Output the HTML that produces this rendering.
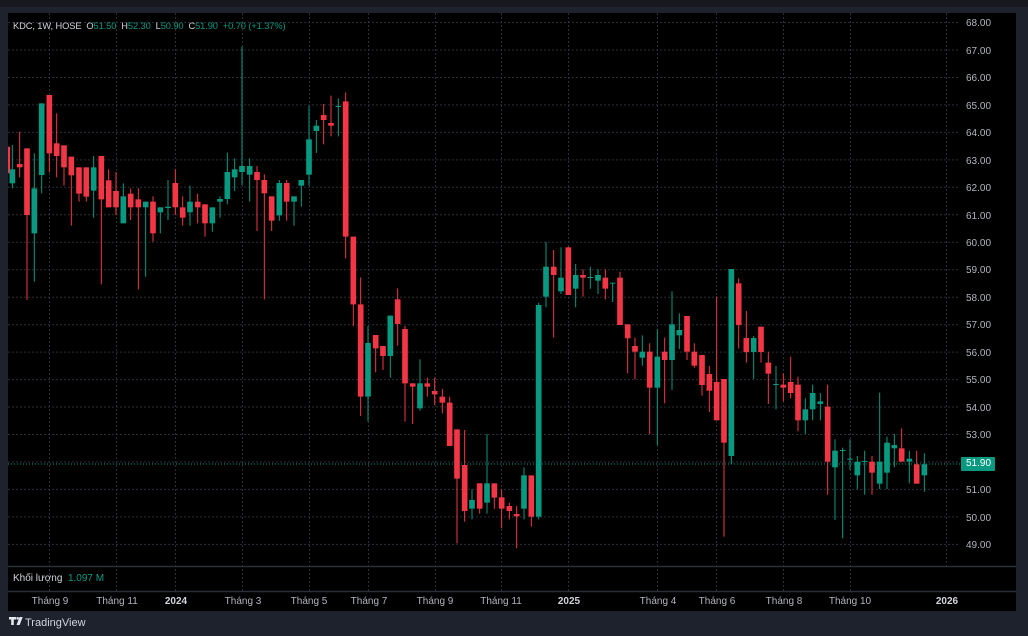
<!DOCTYPE html>
<html><head><meta charset="utf-8"><style>
body{margin:0;width:1028px;height:636px;background:#1e222d;overflow:hidden;font-family:"Liberation Sans",sans-serif;}
.top{position:absolute;left:0;top:0;width:1028px;height:7px;background:#17191f}
.panel{position:absolute;left:8px;top:13px;width:1008px;height:598px;background:#000}
.t{position:absolute;font-size:10px;color:#b2b5be;white-space:nowrap}
.p{margin-top:2px}
.ax{position:absolute;font-size:10px;color:#b2b5be;transform:translateX(-50%);top:596px}
.b{font-weight:bold;color:#d1d4dc}
.g{color:#089981}
</style></head><body>
<div class="top"></div>
<div class="panel"></div>
<svg width="1028" height="636" style="position:absolute;left:0;top:0">
<defs><clipPath id="c"><rect x="8" y="13" width="952" height="553"/></clipPath></defs>
<g stroke="#2a2e39" stroke-width="1" stroke-dasharray="2,2">
<line x1="8" x2="960" y1="22.5" y2="22.5"/><line x1="8" x2="960" y1="50" y2="50"/><line x1="8" x2="960" y1="77.5" y2="77.5"/><line x1="8" x2="960" y1="104.9" y2="104.9"/><line x1="8" x2="960" y1="132.4" y2="132.4"/><line x1="8" x2="960" y1="159.9" y2="159.9"/><line x1="8" x2="960" y1="187.3" y2="187.3"/><line x1="8" x2="960" y1="214.8" y2="214.8"/><line x1="8" x2="960" y1="242.3" y2="242.3"/><line x1="8" x2="960" y1="269.7" y2="269.7"/><line x1="8" x2="960" y1="297.2" y2="297.2"/><line x1="8" x2="960" y1="324.7" y2="324.7"/><line x1="8" x2="960" y1="352.1" y2="352.1"/><line x1="8" x2="960" y1="379.6" y2="379.6"/><line x1="8" x2="960" y1="407" y2="407"/><line x1="8" x2="960" y1="434.5" y2="434.5"/><line x1="8" x2="960" y1="462" y2="462"/><line x1="8" x2="960" y1="489.4" y2="489.4"/><line x1="8" x2="960" y1="516.9" y2="516.9"/><line x1="8" x2="960" y1="544.4" y2="544.4"/>
<g>
<line x1="49.5" x2="49.5" y1="13" y2="592"/><line x1="116.5" x2="116.5" y1="13" y2="592"/><line x1="175.5" x2="175.5" y1="13" y2="592"/><line x1="242.5" x2="242.5" y1="13" y2="592"/><line x1="309.5" x2="309.5" y1="13" y2="592"/><line x1="368.5" x2="368.5" y1="13" y2="592"/><line x1="435.5" x2="435.5" y1="13" y2="592"/><line x1="501.5" x2="501.5" y1="13" y2="592"/><line x1="568.5" x2="568.5" y1="13" y2="592"/><line x1="657.5" x2="657.5" y1="13" y2="592"/><line x1="716.5" x2="716.5" y1="13" y2="592"/><line x1="783.5" x2="783.5" y1="13" y2="592"/><line x1="850.5" x2="850.5" y1="13" y2="592"/><line x1="946.5" x2="946.5" y1="13" y2="566"/>
</g></g>
<g stroke="#2a2e39" stroke-width="1.5"><line x1="8" x2="1016" y1="566.5" y2="566.5"/><line x1="8" x2="1016" y1="591.5" y2="591.5"/></g>
<line x1="8" x2="960" y1="464" y2="464" stroke="#089981" stroke-dasharray="1,2" stroke-width="1"/>
<g clip-path="url(#c)">
<g transform="translate(0,40) scale(0.33333)">
<g stroke="#f23645" stroke-width="3"><line x1="22" x2="22" y1="315" y2="420"/><line x1="59" x2="59" y1="275" y2="412"/><line x1="81" x2="81" y1="325" y2="780"/><line x1="148" x2="148" y1="165" y2="397"/><line x1="170" x2="170" y1="220" y2="412"/><line x1="192" x2="192" y1="316" y2="437"/><line x1="214" x2="214" y1="350" y2="557"/><line x1="237" x2="237" y1="382" y2="485"/><line x1="259" x2="259" y1="382" y2="485"/><line x1="304" x2="304" y1="348" y2="733"/><line x1="326" x2="326" y1="388" y2="502"/><line x1="348" x2="348" y1="396" y2="525"/><line x1="392" x2="392" y1="445" y2="540"/><line x1="415" x2="415" y1="445" y2="748"/><line x1="459" x2="459" y1="469" y2="605"/><line x1="526" x2="526" y1="388" y2="525"/><line x1="548" x2="548" y1="469" y2="557"/><line x1="593" x2="593" y1="461" y2="550"/><line x1="615" x2="615" y1="493" y2="590"/></g>
<g stroke="#f23645" stroke-width="17"><line x1="22" x2="22" y1="320" y2="400"/><line x1="59" x2="59" y1="372" y2="382"/><line x1="81" x2="81" y1="325" y2="525"/><line x1="148" x2="148" y1="165" y2="340"/><line x1="170" x2="170" y1="310" y2="348"/><line x1="192" x2="192" y1="316" y2="382"/><line x1="214" x2="214" y1="350" y2="406"/><line x1="237" x2="237" y1="382" y2="461"/><line x1="259" x2="259" y1="382" y2="470"/><line x1="304" x2="304" y1="348" y2="478"/><line x1="326" x2="326" y1="421" y2="502"/><line x1="348" x2="348" y1="453" y2="502"/><line x1="392" x2="392" y1="461" y2="502"/><line x1="415" x2="415" y1="478" y2="502"/><line x1="459" x2="459" y1="485" y2="580"/><line x1="526" x2="526" y1="429" y2="502"/><line x1="548" x2="548" y1="502" y2="533"/><line x1="593" x2="593" y1="485" y2="502"/><line x1="615" x2="615" y1="493" y2="550"/></g>
<g stroke="#089981" stroke-width="3"><line x1="37" x2="37" y1="315" y2="445"/><line x1="103" x2="103" y1="340" y2="725"/><line x1="125" x2="125" y1="190" y2="460"/><line x1="281" x2="281" y1="348" y2="533"/><line x1="370" x2="370" y1="430" y2="550"/><line x1="437" x2="437" y1="485" y2="710"/><line x1="481" x2="481" y1="502" y2="580"/><line x1="504" x2="504" y1="420" y2="540"/><line x1="570" x2="570" y1="437" y2="557"/><line x1="637" x2="637" y1="502" y2="575"/><line x1="660" x2="660" y1="469" y2="533"/><line x1="682" x2="682" y1="338" y2="493"/><line x1="704" x2="704" y1="355" y2="453"/></g>
<g stroke="#089981" stroke-width="17"><line x1="37" x2="37" y1="388" y2="430"/><line x1="103" x2="103" y1="445" y2="580"/><line x1="125" x2="125" y1="190" y2="405"/><line x1="281" x2="281" y1="382" y2="452"/><line x1="370" x2="370" y1="469" y2="550"/><line x1="437" x2="437" y1="485" y2="502"/><line x1="481" x2="481" y1="502" y2="517"/><line x1="504" x2="504" y1="500" y2="504"/><line x1="570" x2="570" y1="485" y2="517"/><line x1="637" x2="637" y1="502" y2="550"/><line x1="660" x2="660" y1="477" y2="485"/><line x1="682" x2="682" y1="396" y2="477"/><line x1="704" x2="704" y1="388" y2="412"/></g>
</g>
<g transform="translate(230,40) scale(0.33333)">
<g stroke="#f23645" stroke-width="3"><line x1="81" x2="81" y1="378" y2="573"/><line x1="103" x2="103" y1="403" y2="778"/><line x1="125" x2="125" y1="469" y2="573"/><line x1="170" x2="170" y1="420" y2="542"/><line x1="281" x2="281" y1="192" y2="313"/><line x1="303" x2="303" y1="167" y2="289"/><line x1="347" x2="347" y1="157" y2="655"/><line x1="370" x2="370" y1="590" y2="858"/><line x1="392" x2="392" y1="712" y2="1128"/><line x1="437" x2="437" y1="885" y2="997"/><line x1="459" x2="459" y1="918" y2="990"/><line x1="503" x2="503" y1="745" y2="917"/><line x1="525" x2="525" y1="858" y2="1145"/><line x1="548" x2="548" y1="1030" y2="1152"/><line x1="592" x2="592" y1="1013" y2="1070"/><line x1="614" x2="614" y1="1013" y2="1095"/><line x1="637" x2="637" y1="1047" y2="1120"/><line x1="659" x2="659" y1="1070" y2="1218"/><line x1="681" x2="681" y1="1168" y2="1510"/></g>
<g stroke="#f23645" stroke-width="17"><line x1="81" x2="81" y1="396" y2="420"/><line x1="103" x2="103" y1="420" y2="460"/><line x1="125" x2="125" y1="469" y2="542"/><line x1="170" x2="170" y1="429" y2="485"/><line x1="281" x2="281" y1="225" y2="240"/><line x1="303" x2="303" y1="249" y2="257"/><line x1="347" x2="347" y1="184" y2="590"/><line x1="370" x2="370" y1="590" y2="793"/><line x1="392" x2="392" y1="793" y2="1070"/><line x1="437" x2="437" y1="885" y2="925"/><line x1="459" x2="459" y1="918" y2="948"/><line x1="503" x2="503" y1="778" y2="852"/><line x1="525" x2="525" y1="867" y2="1030"/><line x1="548" x2="548" y1="1030" y2="1040"/><line x1="592" x2="592" y1="1030" y2="1040"/><line x1="614" x2="614" y1="1053" y2="1063"/><line x1="637" x2="637" y1="1070" y2="1088"/><line x1="659" x2="659" y1="1088" y2="1218"/><line x1="681" x2="681" y1="1168" y2="1316"/></g>
<g stroke="#089981" stroke-width="3"><line x1="36" x2="36" y1="20" y2="435"/><line x1="59" x2="59" y1="355" y2="485"/><line x1="148" x2="148" y1="420" y2="542"/><line x1="192" x2="192" y1="469" y2="557"/><line x1="214" x2="214" y1="420" y2="500"/><line x1="237" x2="237" y1="198" y2="437"/><line x1="259" x2="259" y1="240" y2="339"/><line x1="325" x2="325" y1="175" y2="289"/><line x1="414" x2="414" y1="858" y2="1145"/><line x1="481" x2="481" y1="827" y2="1013"/><line x1="570" x2="570" y1="958" y2="1112"/></g>
<g stroke="#089981" stroke-width="17"><line x1="36" x2="36" y1="378" y2="396"/><line x1="59" x2="59" y1="378" y2="404"/><line x1="148" x2="148" y1="429" y2="526"/><line x1="192" x2="192" y1="469" y2="485"/><line x1="214" x2="214" y1="420" y2="437"/><line x1="237" x2="237" y1="298" y2="404"/><line x1="259" x2="259" y1="257" y2="273"/><line x1="325" x2="325" y1="198" y2="201"/><line x1="414" x2="414" y1="909" y2="1070"/><line x1="481" x2="481" y1="827" y2="948"/><line x1="570" x2="570" y1="1030" y2="1105"/></g>
</g>
<g transform="translate(460,230) scale(0.33333)">
<g stroke="#f23645" stroke-width="3"><line x1="14" x2="14" y1="600" y2="875"/><line x1="59" x2="59" y1="760" y2="851"/><line x1="103" x2="103" y1="760" y2="836"/><line x1="125" x2="125" y1="778" y2="895"/><line x1="148" x2="148" y1="818" y2="868"/><line x1="170" x2="170" y1="828" y2="955"/><line x1="214" x2="214" y1="736" y2="890"/><line x1="281" x2="281" y1="60" y2="323"/><line x1="325" x2="325" y1="50" y2="195"/><line x1="369" x2="369" y1="118" y2="200"/><line x1="436" x2="436" y1="118" y2="208"/><line x1="480" x2="480" y1="125" y2="285"/><line x1="503" x2="503" y1="283" y2="430"/><line x1="525" x2="525" y1="323" y2="448"/><line x1="569" x2="569" y1="340" y2="612"/><line x1="614" x2="614" y1="323" y2="520"/><line x1="681" x2="681" y1="258" y2="390"/><line x1="703" x2="703" y1="340" y2="413"/></g>
<g stroke="#f23645" stroke-width="17"><line x1="14" x2="14" y1="705" y2="843"/><line x1="59" x2="59" y1="760" y2="836"/><line x1="103" x2="103" y1="760" y2="803"/><line x1="125" x2="125" y1="802" y2="836"/><line x1="148" x2="148" y1="828" y2="843"/><line x1="170" x2="170" y1="852" y2="859"/><line x1="214" x2="214" y1="736" y2="860"/><line x1="281" x2="281" y1="110" y2="135"/><line x1="325" x2="325" y1="52" y2="195"/><line x1="369" x2="369" y1="135" y2="143"/><line x1="436" x2="436" y1="143" y2="176"/><line x1="480" x2="480" y1="143" y2="285"/><line x1="503" x2="503" y1="283" y2="325"/><line x1="525" x2="525" y1="348" y2="365"/><line x1="569" x2="569" y1="365" y2="473"/><line x1="614" x2="614" y1="365" y2="390"/><line x1="681" x2="681" y1="258" y2="365"/><line x1="703" x2="703" y1="365" y2="407"/></g>
<g stroke="#089981" stroke-width="3"><line x1="36" x2="36" y1="778" y2="868"/><line x1="81" x2="81" y1="612" y2="851"/><line x1="192" x2="192" y1="712" y2="868"/><line x1="236" x2="236" y1="218" y2="868"/><line x1="258" x2="258" y1="36" y2="232"/><line x1="303" x2="303" y1="52" y2="192"/><line x1="347" x2="347" y1="102" y2="232"/><line x1="391" x2="391" y1="110" y2="176"/><line x1="414" x2="414" y1="118" y2="192"/><line x1="458" x2="458" y1="158" y2="216"/><line x1="547" x2="547" y1="316" y2="407"/><line x1="592" x2="592" y1="298" y2="646"/><line x1="636" x2="636" y1="184" y2="480"/><line x1="658" x2="658" y1="250" y2="357"/></g>
<g stroke="#089981" stroke-width="17"><line x1="36" x2="36" y1="810" y2="836"/><line x1="81" x2="81" y1="760" y2="818"/><line x1="192" x2="192" y1="736" y2="836"/><line x1="236" x2="236" y1="225" y2="860"/><line x1="258" x2="258" y1="110" y2="200"/><line x1="303" x2="303" y1="143" y2="184"/><line x1="347" x2="347" y1="135" y2="176"/><line x1="391" x2="391" y1="141" y2="144"/><line x1="414" x2="414" y1="135" y2="152"/><line x1="458" x2="458" y1="158" y2="161"/><line x1="547" x2="547" y1="365" y2="383"/><line x1="592" x2="592" y1="380" y2="473"/><line x1="636" x2="636" y1="283" y2="390"/><line x1="658" x2="658" y1="300" y2="316"/></g>
</g>
<g transform="translate(690,260) scale(0.33333)">
<g stroke="#f23645" stroke-width="3"><line x1="36" x2="36" y1="285" y2="407"/><line x1="58" x2="58" y1="318" y2="456"/><line x1="80" x2="80" y1="110" y2="480"/><line x1="102" x2="102" y1="357" y2="830"/><line x1="146" x2="146" y1="55" y2="265"/><line x1="169" x2="169" y1="153" y2="308"/><line x1="213" x2="213" y1="200" y2="308"/><line x1="235" x2="235" y1="275" y2="432"/><line x1="280" x2="280" y1="340" y2="424"/><line x1="302" x2="302" y1="290" y2="415"/><line x1="324" x2="324" y1="350" y2="514"/><line x1="413" x2="413" y1="374" y2="704"/><line x1="546" x2="546" y1="588" y2="704"/><line x1="635" x2="635" y1="505" y2="605"/><line x1="680" x2="680" y1="572" y2="671"/></g>
<g stroke="#f23645" stroke-width="17"><line x1="36" x2="36" y1="285" y2="375"/><line x1="58" x2="58" y1="342" y2="392"/><line x1="80" x2="80" y1="366" y2="481"/><line x1="102" x2="102" y1="357" y2="548"/><line x1="146" x2="146" y1="70" y2="195"/><line x1="169" x2="169" y1="234" y2="276"/><line x1="213" x2="213" y1="200" y2="276"/><line x1="235" x2="235" y1="308" y2="341"/><line x1="280" x2="280" y1="374" y2="383"/><line x1="302" x2="302" y1="366" y2="399"/><line x1="324" x2="324" y1="374" y2="481"/><line x1="413" x2="413" y1="440" y2="605"/><line x1="546" x2="546" y1="605" y2="638"/><line x1="635" x2="635" y1="565" y2="605"/><line x1="680" x2="680" y1="613" y2="671"/></g>
<g stroke="#089981" stroke-width="3"><line x1="124" x2="124" y1="27" y2="612"/><line x1="191" x2="191" y1="228" y2="357"/><line x1="258" x2="258" y1="318" y2="448"/><line x1="346" x2="346" y1="415" y2="522"/><line x1="368" x2="368" y1="374" y2="481"/><line x1="391" x2="391" y1="399" y2="481"/><line x1="435" x2="435" y1="538" y2="780"/><line x1="458" x2="458" y1="563" y2="835"/><line x1="480" x2="480" y1="538" y2="630"/><line x1="502" x2="502" y1="588" y2="687"/><line x1="524" x2="524" y1="572" y2="704"/><line x1="569" x2="569" y1="398" y2="687"/><line x1="591" x2="591" y1="530" y2="687"/><line x1="613" x2="613" y1="522" y2="622"/><line x1="658" x2="658" y1="572" y2="670"/><line x1="703" x2="703" y1="580" y2="695"/></g>
<g stroke="#089981" stroke-width="17"><line x1="124" x2="124" y1="27" y2="588"/><line x1="191" x2="191" y1="234" y2="276"/><line x1="258" x2="258" y1="372" y2="375"/><line x1="346" x2="346" y1="448" y2="481"/><line x1="368" x2="368" y1="399" y2="448"/><line x1="391" x2="391" y1="424" y2="432"/><line x1="435" x2="435" y1="572" y2="622"/><line x1="458" x2="458" y1="570" y2="573"/><line x1="480" x2="480" y1="596" y2="599"/><line x1="502" x2="502" y1="605" y2="646"/><line x1="524" x2="524" y1="603" y2="606"/><line x1="569" x2="569" y1="605" y2="671"/><line x1="591" x2="591" y1="548" y2="638"/><line x1="613" x2="613" y1="555" y2="565"/><line x1="658" x2="658" y1="596" y2="605"/><line x1="703" x2="703" y1="613" y2="646"/></g>
</g>
</g>
<rect x="961" y="457" width="34" height="14" rx="1" fill="#089981"/>
<g fill="#e6e8ee"><path d="M9 617h7v2.5h-2.2v5.5h-2.6v-5.5H9z"/><circle cx="17.6" cy="618.3" r="1.3"/><path d="M19.5 617h3.2l-3 8h-3.2z"/></g>
</svg>
<div class="t" style="left:13px;top:21px;color:#d1d4dc;font-size:9.3px;letter-spacing:-0.1px">KDC, 1W, HOSE&nbsp; O<span class="g">51.50</span>&nbsp; H<span class="g">52.30</span>&nbsp; L<span class="g">50.90</span>&nbsp; C<span class="g">51.90</span>&nbsp; <span class="g">+0.70 (+1.37%)</span></div>
<div class="t p" style="left:966px;top:16px">68.00</div><div class="t p" style="left:966px;top:44px">67.00</div><div class="t p" style="left:966px;top:71px">66.00</div><div class="t p" style="left:966px;top:99px">65.00</div><div class="t p" style="left:966px;top:126px">64.00</div><div class="t p" style="left:966px;top:154px">63.00</div><div class="t p" style="left:966px;top:181px">62.00</div><div class="t p" style="left:966px;top:209px">61.00</div><div class="t p" style="left:966px;top:236px">60.00</div><div class="t p" style="left:966px;top:263px">59.00</div><div class="t p" style="left:966px;top:291px">58.00</div><div class="t p" style="left:966px;top:318px">57.00</div><div class="t p" style="left:966px;top:346px">56.00</div><div class="t p" style="left:966px;top:373px">55.00</div><div class="t p" style="left:966px;top:401px">54.00</div><div class="t p" style="left:966px;top:428px">53.00</div><div class="t p" style="left:966px;top:483px">51.00</div><div class="t p" style="left:966px;top:511px">50.00</div><div class="t p" style="left:966px;top:538px">49.00</div>
<div class="t" style="left:966px;top:458px;color:#fff">51.90</div>
<div class="t" style="left:13px;top:573px;color:#d1d4dc">Khối lượng&nbsp; <span class="g">1.097 M</span></div>
<div class="ax" style="left:50px">Tháng 9</div><div class="ax" style="left:117px">Tháng 11</div><div class="ax b" style="left:176px">2024</div><div class="ax" style="left:243px">Tháng 3</div><div class="ax" style="left:309px">Tháng 5</div><div class="ax" style="left:369px">Tháng 7</div><div class="ax" style="left:435px">Tháng 9</div><div class="ax" style="left:501px">Tháng 11</div><div class="ax b" style="left:569px">2025</div><div class="ax" style="left:658px">Tháng 4</div><div class="ax" style="left:717px">Tháng 6</div><div class="ax" style="left:784px">Tháng 8</div><div class="ax" style="left:850px">Tháng 10</div><div class="ax b" style="left:947px">2026</div>
<div class="t" style="left:25px;top:617px;font-size:11px;color:#d1d4dc">TradingView</div>
</body></html>
